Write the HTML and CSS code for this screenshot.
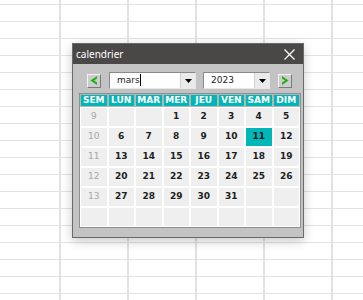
FILE: index.html
```html
<!DOCTYPE html>
<html>
<head>
<meta charset="utf-8">
<link rel="stylesheet" href="styles.css">
</head>
<body>
<div class="dialog">
  <div class="titlebar">
    <span class="title">calendrier</span>
    <svg class="close" width="11" height="11" viewBox="0 0 11 11"><path d="M0.5 0.5L10.5 10.5M10.5 0.5L0.5 10.5" stroke="#fff" stroke-width="1.3"/></svg>
  </div>
  <div class="content">
    <div class="nav">
      <div class="navbtn"><svg width="8" height="9" viewBox="0 0 8 9"><polygon points="7,0 7,2.5 4,4.5 7,6.5 7,9 0.5,4.5" fill="#19b219"/></svg></div>
      <div class="combo month"><span class="val">mars<i class="caret"></i></span><span class="drop"><svg width="7" height="4" viewBox="0 0 7 4"><polygon points="0,0 7,0 3.5,4" fill="#000"/></svg></span></div>
      <div class="combo year"><span class="val">2023</span><span class="drop"><svg width="7" height="4" viewBox="0 0 7 4"><polygon points="0,0 7,0 3.5,4" fill="#000"/></svg></span></div>
      <div class="navbtn"><svg width="8" height="9" viewBox="0 0 8 9"><polygon points="1,0 1,2.5 4,4.5 1,6.5 1,9 7.5,4.5" fill="#19b219"/></svg></div>
    </div>
    <div class="grid">
      <div class="head">
        <span>SEM</span><span>LUN</span><span>MAR</span><span>MER</span><span>JEU</span><span>VEN</span><span>SAM</span><span>DIM</span>
      </div>
      <div class="days">
        <span class="wk">9</span><span></span><span></span><span>1</span><span>2</span><span>3</span><span>4</span><span>5</span>
        <span class="wk">10</span><span>6</span><span>7</span><span>8</span><span>9</span><span>10</span><span class="today">11</span><span>12</span>
        <span class="wk">11</span><span>13</span><span>14</span><span>15</span><span>16</span><span>17</span><span>18</span><span>19</span>
        <span class="wk">12</span><span>20</span><span>21</span><span>22</span><span>23</span><span>24</span><span>25</span><span>26</span>
        <span class="wk">13</span><span>27</span><span>28</span><span>29</span><span>30</span><span>31</span><span></span><span></span>
        <span></span><span></span><span></span><span></span><span></span><span></span><span></span><span></span>
      </div>
    </div>
  </div>
</div>
</body>
</html>
```
FILE: styles.css
```css
html, body {
  margin: 0;
  padding: 0;
  width: 363px;
  height: 300px;
  overflow: hidden;
}
body {
  background-color: #fff;
  background-image:
    repeating-linear-gradient(to right, transparent 0, transparent 59px, #e2e2e2 59px, #e2e2e2 61px, transparent 61px, transparent 68px),
    repeating-linear-gradient(to bottom, transparent 0, transparent 4px, #e2e2e2 4px, #e2e2e2 5px, transparent 5px, transparent 17px);
  background-position: 0 0, 0 0;
  font-family: "DejaVu Sans", Verdana, sans-serif;
  display: flow-root;
}
.dialog {
  margin: 43px 0 0 72px;
  width: 230px;
  border: 1px solid #6a6a6a;
  background: #c3c3c3;
  box-shadow: 0 3px 10px rgba(0, 0, 0, 0.22);
}
.titlebar {
  height: 20px;
  background: #4a4846;
  display: flex;
  align-items: center;
  justify-content: space-between;
  padding: 0 8px 0 3px;
}
.title {
  color: #fff;
  font-family: "Noto Sans", "Open Sans", sans-serif;
  font-size: 10px;
  line-height: 20px;
}
.close { display: block; }
.content {
  padding: 8px 0 9px 6px;
}
.nav {
  display: flex;
  align-items: center;
  margin-left: 8px;
  height: 17px;
}
.navbtn {
  width: 12px;
  height: 12px;
  background: #cdcdcd;
  border: 1px solid;
  border-color: #f4f4f4 #7a7a7a #7a7a7a #f4f4f4;
  display: flex;
  align-items: center;
  justify-content: center;
}
.combo {
  height: 15px;
  background: #fff;
  border: 1px solid;
  border-color: #8a8a8a #e8e8e8 #e8e8e8 #8a8a8a;
  display: flex;
  align-items: stretch;
  font-size: 9px;
  color: #222;
}
.month { width: 85px; margin-left: 8px; }
.year { width: 65px; margin-left: 7px; margin-right: 8px; }
.val {
  flex: 1;
  padding-left: 7px;
  line-height: 15px;
}
.caret {
  display: inline-block;
  width: 1px;
  height: 12px;
  background: #000;
  vertical-align: -3px;
}
.drop {
  width: 14px;
  background: #eaeaea;
  border-left: 1px solid #d0d0d0;
  display: flex;
  align-items: center;
  justify-content: center;
}
.grid {
  margin-top: 4px;
  width: 220px;
  border: 1px solid #8e8e8e;
  background: #fff;
}
.head {
  display: grid;
  grid-template-columns: repeat(8, 1fr);
  gap: 2px;
  padding: 1px;
  background: #b5b5b5;
}
.head span {
  background: #00b6b6;
  color: #fff;
  font-weight: bold;
  font-size: 9px;
  line-height: 11px;
  text-align: center;
}
.days {
  display: grid;
  grid-template-columns: repeat(8, 1fr);
  grid-auto-rows: 18px;
  gap: 2px;
  padding: 1px;
}
.days span {
  background: #efefef;
  font-weight: bold;
  font-size: 9px;
  color: #1e1e1e;
  text-align: center;
  line-height: 16px;
}
.days span.wk {
  color: #a8a8a8;
  font-weight: normal;
}
.days span.today {
  background: #00b6b6;
  color: #1a1a1a;
}
```
